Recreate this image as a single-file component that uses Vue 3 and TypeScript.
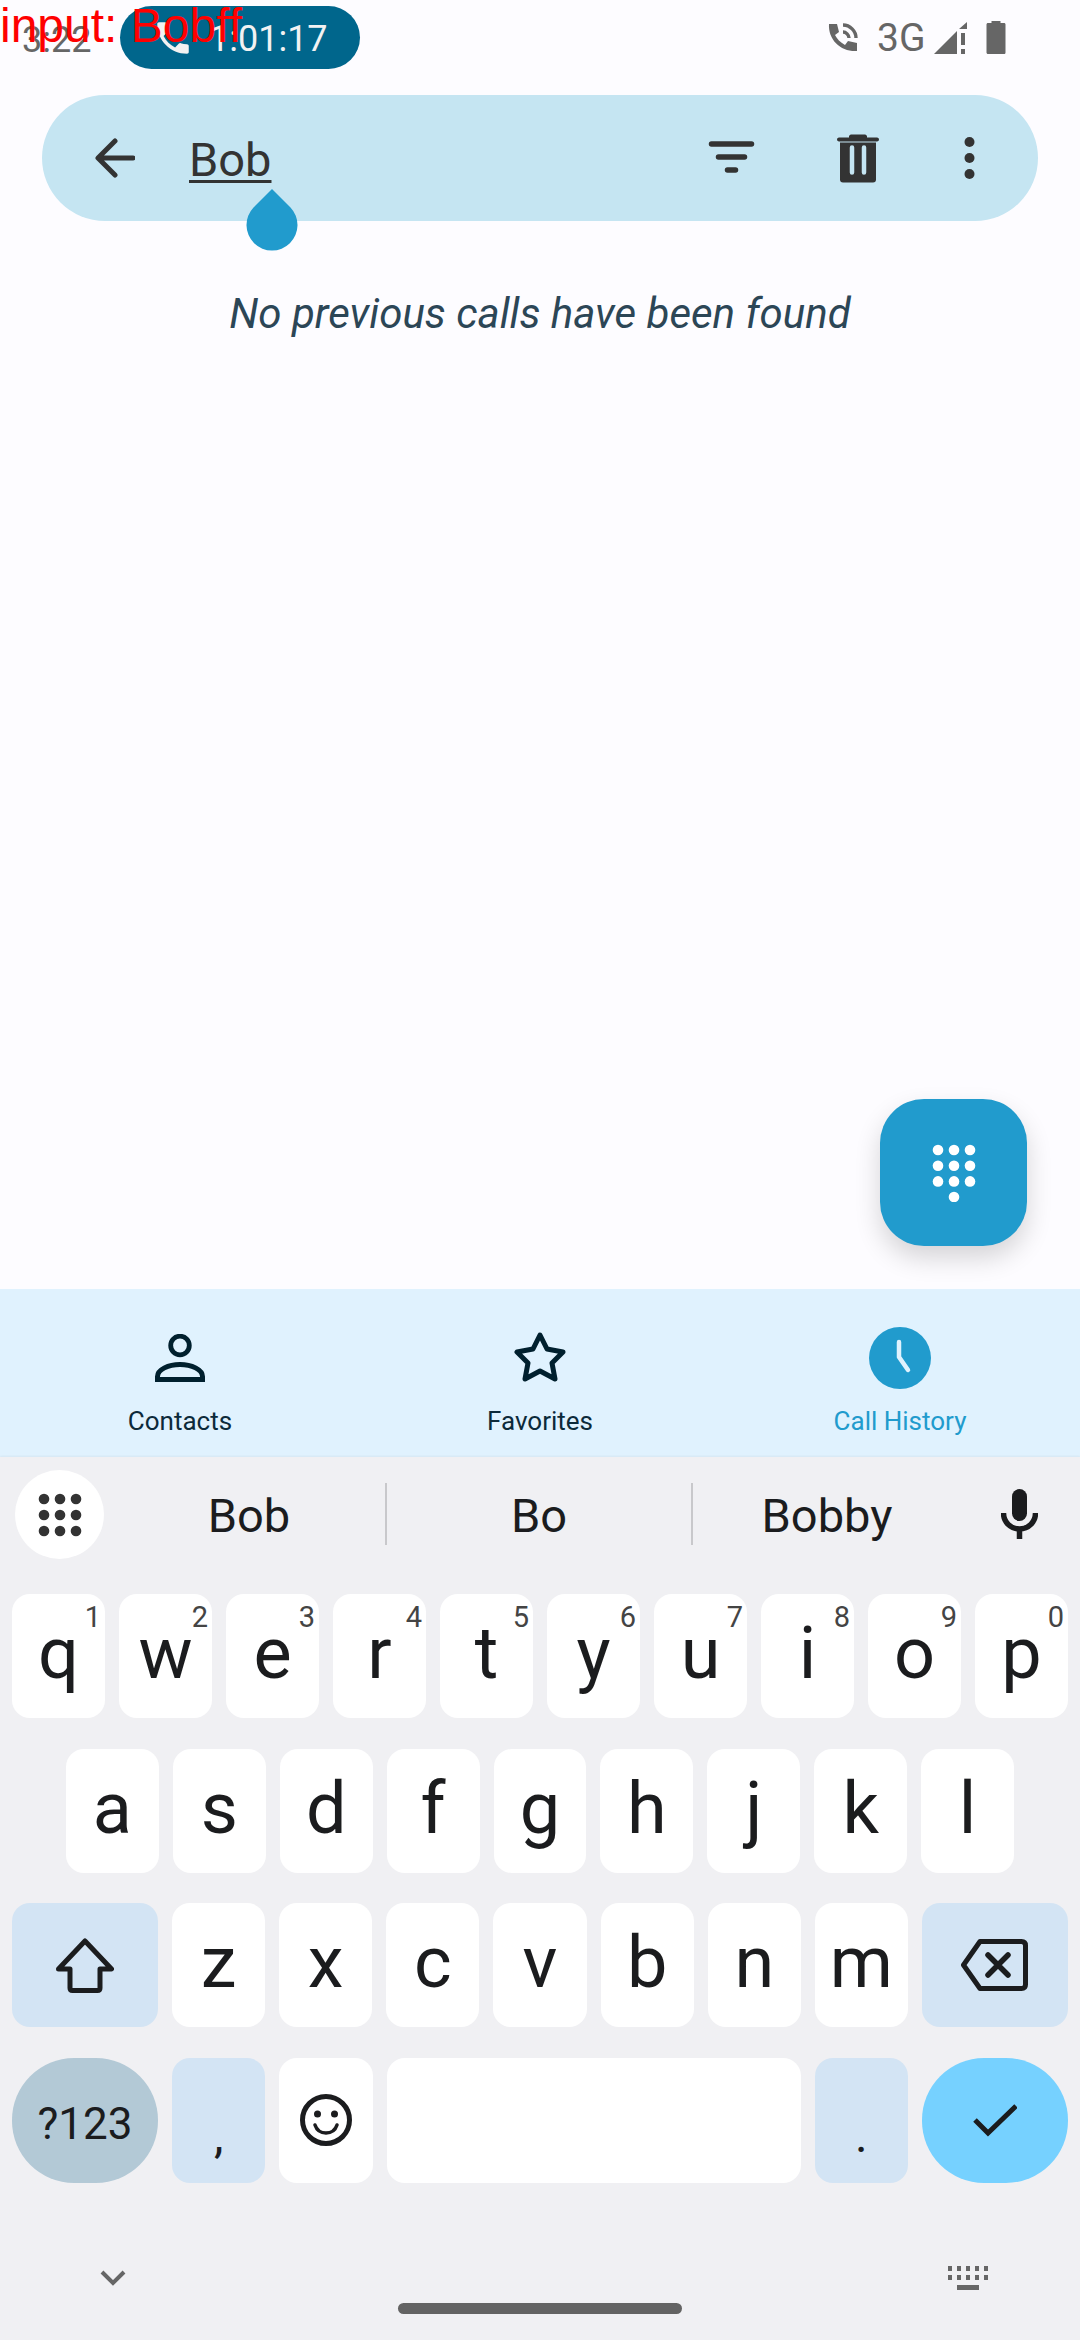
<template>
  <div class="phone">
    <div class="overlay-input">input: Bobff</div>

    <header class="status-bar">
      <span class="clock">3:22</span>
      <div class="call-pill">
        <svg class="pill-phone" viewBox="0 0 24 24">
          <path d="M6.6 10.8c1.4 2.8 3.8 5.1 6.6 6.6l2.2-2.2c.3-.3.7-.4 1-.2 1.1.4 2.3.6 3.6.6.6 0 1 .4 1 1V20c0 .6-.4 1-1 1C10.6 21 3 13.4 3 4c0-.6.4-1 1-1h3.5c.6 0 1 .4 1 1 0 1.3.2 2.5.6 3.6.1.3 0 .7-.2 1z" />
        </svg>
        <span class="pill-time">1:01:17</span>
      </div>
      <div class="status-icons">
        <svg class="ic-call" viewBox="0 0 30 30">
          <path d="M1 1h8l2 8-4 3c2 4 5 7 10 10l3-4 9 2v8c-16 1-29-11-28-27z" fill="#666" />
          <path d="M15 9c3 0 6 3 6 6M15 2c7 0 13 6 13 13" fill="none" stroke="#666" stroke-width="3.4" />
        </svg>
        <span class="net">3G</span>
        <svg class="ic-signal" viewBox="0 0 33 32">
          <path d="M0 32 23 9v23zM25 7l8-7v7z" fill="#666" />
          <path d="M27 11h4v12h-4zM27 27h4v5h-4z" fill="#666" />
        </svg>
        <svg class="ic-battery" viewBox="0 0 19 33">
          <path d="M5 0h9v2h3.500c1 0 1.500.6 1.500 1.500V31.500c0 1-.6 1.500-1.500 1.500H1.500C.6 33 0 32.400 0 31.500V3.500C0 2.600.6 2 1.500 2H5z" fill="#666" />
        </svg>
      </div>
    </header>

    <div class="search-bar">
      <svg class="ic-back" viewBox="0 0 40 40">
        <path d="M38 20H4M20 3 3 20l17 17" fill="none" stroke="#333" stroke-width="5" stroke-linecap="round" stroke-linejoin="round" />
      </svg>
      <span class="search-text">Bob</span>
      <div class="search-actions">
        <svg class="ic-filter" viewBox="0 0 46 34">
          <path d="M3 3h40M10 16h26M19 29h8" fill="none" stroke="#333" stroke-width="5.500" stroke-linecap="round" />
        </svg>
        <svg class="ic-trash" viewBox="0 0 42 48">
          <path d="M12 3V2c0-1 1-2 2-2h14c1 0 2 1 2 2v1h10c1 0 2 .7 2 2s-1 2-2 2H2C1 7 0 6.300 0 5s1-2 2-2zM3 8h36v37c0 2-1 3-3 3H6c-2 0-3-1-3-3z" fill="#333" />
          <path d="M15 13v25M27 13v25" stroke="#c5e5f2" stroke-width="4.500" stroke-linecap="round" />
        </svg>
        <svg class="ic-more" viewBox="0 0 10 42">
          <circle cx="5" cy="5" r="5" /><circle cx="5" cy="21" r="5" /><circle cx="5" cy="37" r="5" />
        </svg>
      </div>
      <svg class="text-handle" viewBox="0 0 51 63">
        <path d="M25.500 0 7 18.500A25.500 25.500 0 1 0 44 18.500z" />
      </svg>
    </div>

    <main class="content">
      <p class="empty">No previous calls have been found</p>
      <button class="fab">
        <svg viewBox="0 0 44 58" class="ic-dial">
          <circle v-for="d in dialDots" :key="d.id" :cx="d.x" :cy="d.y" r="5.300" fill="#fff" />
        </svg>
      </button>
    </main>

    <nav class="bottom-nav">
      <div class="nav-item">
        <div class="nav-icon">
          <svg viewBox="0 0 50 48" width="50" height="48">
            <circle cx="25" cy="11.500" r="9.300" fill="none" stroke="#00202e" stroke-width="4.800" />
            <path d="M2.500 45.500v-3c0-7 11-12 22.500-12s22.500 5 22.500 12v3z" fill="none" stroke="#00202e" stroke-width="5" />
          </svg>
        </div>
        <span>Contacts</span>
      </div>
      <div class="nav-item">
        <div class="nav-icon">
          <svg viewBox="0 0 52 52" width="52" height="52">
            <path d="M26 3 33 17 49 20 38 31 41 47 26 39 11 47 14 31 3 20 19 17Z" fill="none" stroke="#00202e" stroke-width="5" stroke-linejoin="round" />
          </svg>
        </div>
        <span>Favorites</span>
      </div>
      <div class="nav-item active">
        <div class="nav-icon">
          <svg viewBox="0 0 62 62" width="62" height="62">
            <circle cx="31" cy="31" r="31" fill="#219bcd" />
            <path d="M30 15v15l9 13" fill="none" stroke="#e0f2fe" stroke-width="4.500" stroke-linecap="round" stroke-linejoin="round" />
          </svg>
        </div>
        <span>Call History</span>
      </div>
    </nav>

    <section class="keyboard">
      <div class="suggestions">
        <div class="apps-btn">
          <svg viewBox="0 0 44 44" width="44" height="44">
            <circle v-for="d in appDots" :key="d.id" :cx="d.x" :cy="d.y" r="5.300" fill="#333" />
          </svg>
        </div>
        <div class="words">
          <span class="word w1">Bob</span>
          <span class="word w2 sep">Bo</span>
          <span class="word w3 sep">Bobby</span>
        </div>
        <svg class="ic-mic" viewBox="0 0 37 50">
          <rect x="11" y="0" width="15" height="32" rx="7.500" fill="#1b1c1e" />
          <path d="M2.500 24c0 9 7 16 16 16s16-7 16-16M18.500 38v12" fill="none" stroke="#1b1c1e" stroke-width="5.500" />
        </svg>
      </div>

      <div class="rows">
        <div class="row">
          <div v-for="(k, i) in topRow" :key="k" class="key">
            <span class="hint">{{ hints[i] }}</span>{{ k }}
          </div>
        </div>
        <div class="row row-mid">
          <div v-for="k in midRow" :key="k" class="key">{{ k }}</div>
        </div>
        <div class="row">
          <div class="key wide mod">
            <svg viewBox="0 0 58 55" width="58" height="55">
              <path d="M29 3 55.500 31H44V50q0 2.500-2.500 2.500H16.500q-2.500 0-2.500-2.500V31H2.500Z" fill="none" stroke="#1b1c1e" stroke-width="5" stroke-linejoin="round" />
            </svg>
          </div>
          <div v-for="k in lowRow" :key="k" class="key">{{ k }}</div>
          <div class="key wide mod">
            <svg viewBox="0 0 67 52" width="67" height="52">
              <path d="M19 2.500H60.500q4 0 4 4V45.500q0 4-4 4H19L2.500 26Z" fill="none" stroke="#1b1c1e" stroke-width="5" stroke-linejoin="round" />
              <path d="M27 16 47 36M47 16 27 36" stroke="#1b1c1e" stroke-width="5.500" stroke-linecap="round" />
            </svg>
          </div>
        </div>
        <div class="row row-last">
          <div class="key wide sym">?123</div>
          <div class="key mod punct">,</div>
          <div class="key emoji">
            <svg viewBox="0 0 52 52" width="52" height="52">
              <circle cx="26" cy="26" r="23.500" fill="none" stroke="#1b1c1e" stroke-width="5" />
              <circle cx="17.500" cy="20" r="3.500" fill="#1b1c1e" />
              <circle cx="34.500" cy="20" r="3.500" fill="#1b1c1e" />
              <path d="M15 31c2 6 6 8 11 8s9-2 11-8" fill="none" stroke="#1b1c1e" stroke-width="3.500" stroke-linecap="round" />
            </svg>
          </div>
          <div class="key space"></div>
          <div class="key mod punct">.</div>
          <div class="key wide enter">
            <svg viewBox="0 0 44 34" width="44" height="34">
              <path d="M2 17 15 30 43 3" fill="none" stroke="#1b1c1e" stroke-width="5" />
            </svg>
          </div>
        </div>
      </div>

      <div class="kb-footer">
        <svg class="ic-chevron" viewBox="0 0 26 16">
          <path d="m2 2 11 11L24 2" fill="none" stroke="#666" stroke-width="4" />
        </svg>
        <div class="home-bar"></div>
        <svg class="ic-small-kb" viewBox="0 0 42 24">
          <path d="M1 0h4v5H1zM10 0h4v5h-4zM19 0h4v5h-4zM28 0h4v5h-4zM37 0h4v5h-4zM1 9h4v5H1zM10 9h4v5h-4zM19 9h4v5h-4zM28 9h4v5h-4zM37 9h4v5h-4zM10 19h22v5H10z" fill="#666" />
        </svg>
      </div>
    </section>
  </div>
</template>

<script setup lang="ts">
const topRow = ['q', 'w', 'e', 'r', 't', 'y', 'u', 'i', 'o', 'p']
const hints = ['1', '2', '3', '4', '5', '6', '7', '8', '9', '0']
const midRow = ['a', 's', 'd', 'f', 'g', 'h', 'j', 'k', 'l']
const lowRow = ['z', 'x', 'c', 'v', 'b', 'n', 'm']

const dialDots = [
  ...[0, 1, 2].flatMap((r) =>
    [0, 1, 2].map((c) => ({ id: `${r}-${c}`, x: 6 + c * 16, y: 6 + r * 15.7 })),
  ),
  { id: 'zero', x: 22, y: 53 },
]

const appDots = [0, 1, 2].flatMap((r) =>
  [0, 1, 2].map((c) => ({ id: `${r}-${c}`, x: 6 + c * 16, y: 6 + r * 16 })),
)
</script>

<style>
body {
  background: #fdfcff;
}
</style>

<style scoped>
.phone {
  position: relative;
  width: 1080px;
  height: 2340px;
  display: flex;
  flex-direction: column;
  overflow: hidden;
  background: #fdfcff;
  font-family: Roboto, sans-serif;
}
.overlay-input {
  position: absolute;
  left: 0;
  top: 0;
  z-index: 5;
  color: #ff0000;
  font-family: "Liberation Sans", sans-serif;
  font-size: 48px;
  line-height: 52px;
}
.status-bar {
  height: 95px;
  flex: none;
  display: flex;
  align-items: flex-start;
  padding: 6px 74px 0 22px;
  box-sizing: border-box;
  color: #666;
}
.clock {
  font-size: 36px;
  line-height: 63px;
  width: 98px;
  padding-top: 3px;
}
.call-pill {
  width: 240px;
  height: 63px;
  border-radius: 32px;
  background: #00668c;
  color: #f2f2f2;
  display: flex;
  align-items: center;
  padding-left: 32px;
  box-sizing: border-box;
  font-size: 36px;
  gap: 15px;
}
.pill-time {
  padding-top: 3px;
}
.pill-phone {
  width: 42px;
  height: 42px;
  fill: #f2f2f2;
  flex: none;
}
.status-icons {
  margin-left: auto;
  display: flex;
  align-items: center;
  height: 63px;
}
.ic-call {
  width: 30px;
  height: 30px;
}
.net {
  margin-left: 19px;
  font-size: 39px;
  width: 46px;
  white-space: nowrap;
}
.ic-signal {
  width: 33px;
  height: 32px;
  margin-left: 11px;
}
.ic-battery {
  width: 20px;
  height: 33px;
  margin-left: 19px;
}
.search-bar {
  position: relative;
  flex: none;
  margin: 0 42px;
  height: 126px;
  border-radius: 63px;
  background: #c5e5f2;
  display: flex;
  align-items: center;
  padding-left: 53px;
}
.ic-back {
  width: 40px;
  height: 40px;
}
.search-text {
  margin-left: 54px;
  padding-top: 2px;
  font-size: 47px;
  color: #333;
  text-decoration: underline;
  text-decoration-thickness: 3px;
  text-underline-offset: 4px;
}
.search-actions {
  margin-left: auto;
  display: flex;
  align-items: center;
  padding-right: 63px;
}
.ic-filter {
  width: 47px;
  height: 34px;
}
.ic-trash {
  width: 42px;
  height: 49px;
  margin-left: 82px;
}
.ic-more {
  width: 11px;
  height: 42px;
  margin-left: 85px;
  fill: #333;
}
.text-handle {
  position: absolute;
  left: 204px;
  top: 94px;
  width: 52px;
  height: 63px;
  fill: #219bcd;
}
.content {
  position: relative;
  flex: 1;
  text-align: center;
}
.empty {
  margin: 69px 0 0;
  font-size: 42px;
  line-height: 48px;
  font-style: italic;
  color: #2c4656;
}
.fab {
  position: absolute;
  right: 53px;
  bottom: 43px;
  width: 147px;
  height: 147px;
  border: 0;
  border-radius: 44px;
  background: #219bcd;
  box-shadow: 0 12px 26px rgba(0, 0, 0, 0.16);
  display: flex;
  align-items: center;
  justify-content: center;
  padding: 0;
}
.ic-dial {
  width: 44px;
  height: 58px;
}
.bottom-nav {
  flex: none;
  height: 168px;
  background: #e0f2fe;
  display: flex;
  color: #0c2a3a;
  font-size: 26px;
}
.nav-item {
  flex: 1;
  display: flex;
  flex-direction: column;
  align-items: center;
  padding-top: 38px;
}
.nav-icon {
  height: 62px;
  display: flex;
  align-items: center;
  justify-content: center;
}
.nav-item span {
  margin-top: 18px;
  line-height: 28px;
}
.nav-item.active {
  color: #219bcd;
}
.keyboard {
  flex: none;
  height: 883px;
  background: #f0f0f3;
  box-shadow: 0 -1px 2px rgba(0, 0, 0, 0.05);
  display: flex;
  flex-direction: column;
  color: #1b1c1e;
}
.suggestions {
  height: 137px;
  flex: none;
  display: flex;
  align-items: flex-start;
  padding: 13px 0 0 15px;
  box-sizing: border-box;
}
.apps-btn {
  width: 89px;
  height: 89px;
  border-radius: 50%;
  background: #fff;
  display: flex;
  align-items: center;
  justify-content: center;
  flex: none;
}
.words {
  display: flex;
  margin-left: 9px;
  height: 62px;
  margin-top: 13px;
  font-size: 47px;
}
.word {
  display: flex;
  align-items: center;
  justify-content: center;
  line-height: 62px;
  padding-top: 3px;
  box-sizing: border-box;
}
.w1 {
  width: 272px;
}
.w2 {
  width: 306px;
}
.w3 {
  width: 270px;
}
.word.sep {
  border-left: 2px solid #c8c8cb;
}
.ic-mic {
  width: 37px;
  height: 50px;
  margin: 19px 0 0 40px;
}
.rows {
  display: flex;
  flex-direction: column;
  gap: 30.5px;
  padding: 0 12px;
}
.row {
  display: flex;
  gap: 14px;
  height: 124px;
}
.row-mid {
  padding: 0 54px;
}
.row-last {
  height: 125px;
}
.key {
  position: relative;
  flex: 1 1 0;
  min-width: 0;
  border-radius: 18px;
  background: #fff;
  display: flex;
  align-items: center;
  justify-content: center;
  font-size: 72px;
  padding-bottom: 5px;
  box-sizing: border-box;
}
.hint {
  position: absolute;
  top: 8px;
  right: 4px;
  font-size: 29px;
  line-height: 30px;
  color: #444;
}
.wide {
  flex: 0 0 146px;
  padding-bottom: 0;
}
.mod {
  background: #d3e4f4;
}
.sym {
  background: #b3c9d6;
  border-radius: 62px;
  font-size: 44px;
  padding-top: 8px;
}
.enter {
  background: #76d1ff;
  border-radius: 62px;
}
.punct {
  font-size: 48px;
  padding: 30px 0 0;
}
.emoji {
  padding-bottom: 0;
}
.space {
  flex: 0 0 414px;
}
.kb-footer {
  position: relative;
  flex: 1;
}
.ic-chevron {
  position: absolute;
  left: 100px;
  top: 87px;
  width: 26px;
  height: 16px;
}
.ic-small-kb {
  position: absolute;
  left: 947px;
  top: 83px;
  width: 42px;
  height: 24px;
}
.home-bar {
  position: absolute;
  left: 398px;
  top: 120px;
  width: 284px;
  height: 11px;
  border-radius: 6px;
  background: #636363;
}
</style>
